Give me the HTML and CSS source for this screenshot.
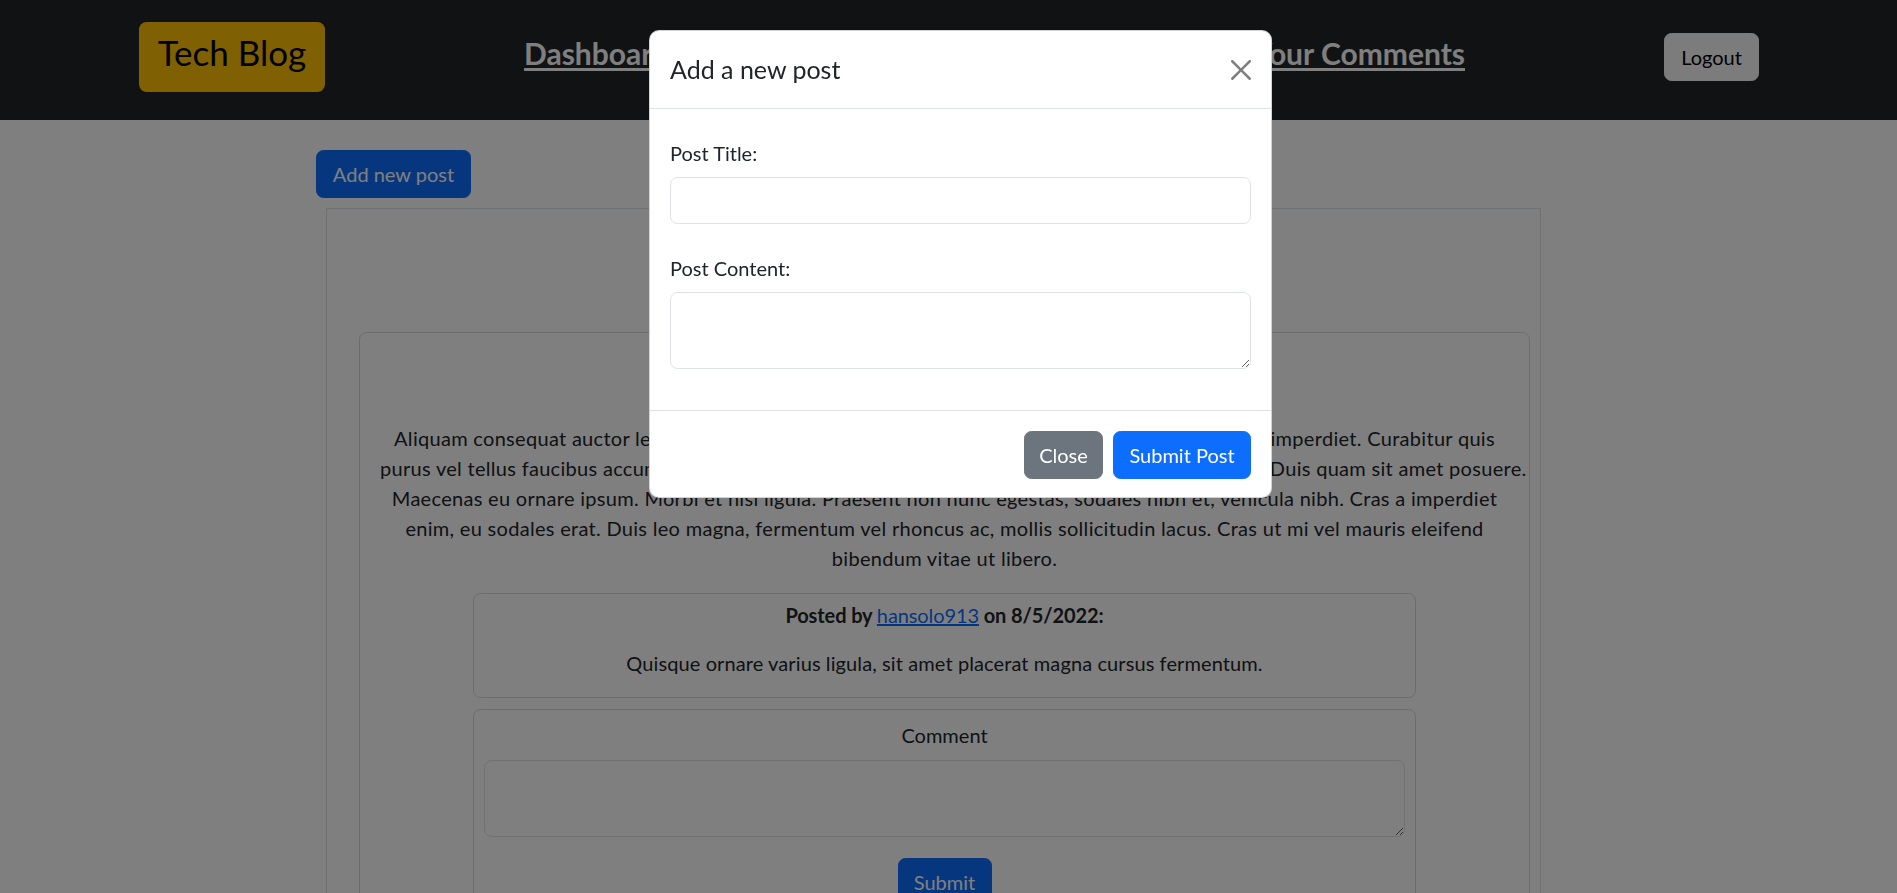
FILE: index.html
```html
<!DOCTYPE html>
<html lang="en">
<head>
<meta charset="utf-8">
<title>Tech Blog</title>
<link rel="stylesheet" href="styles.css">
</head>
<body>
<header class="navbar">
  <a class="brand" href="#">Tech Blog</a>
  <nav class="nav-links">
    <a class="nav-link" href="#">Dashboard</a>
    <a class="nav-link" href="#">Your Posts</a>
    <a class="nav-link" href="#">Your Comments</a>
  </nav>
  <button class="btn btn-light btn-logout" type="button">Logout</button>
</header>

<main class="main">
  <button class="btn btn-primary btn-add" type="button">Add new post</button>
  <section class="posts-box">
    <h2 class="box-title">Your Posts</h2>
    <article class="post-card">
      <h3 class="post-title">Lorem Ipsum</h3>
      <p class="post-text">
        <span class="line">Aliquam consequat auctor leo, vitae semper est facilisis et. Sed in lorem lacus. Nunc vulputate ex imperdiet. Curabitur quis</span>
        <span class="line">purus vel tellus faucibus accumsan. Nam tincidunt lectus vel metus finibus, in dapibus tortor lacus. Duis quam sit amet posuere.</span>
        <span class="line">Maecenas eu ornare ipsum. Morbi et nisi ligula. Praesent non nunc egestas, sodales nibh et, vehicula nibh. Cras a imperdiet</span>
        <span class="line">enim, eu sodales erat. Duis leo magna, fermentum vel rhoncus ac, mollis sollicitudin lacus. Cras ut mi vel mauris eleifend</span>
        <span class="line">bibendum vitae ut libero.</span>
      </p>
      <div class="comment-card">
        <div class="comment-meta">Posted by <a class="user-link" href="#">hansolo913</a> on 8/5/2022:</div>
        <div class="comment-body">Quisque ornare varius ligula, sit amet placerat magna cursus fermentum.</div>
      </div>
      <form class="comment-form">
        <label class="comment-label" for="comment">Comment</label>
        <textarea id="comment" class="form-control comment-input" rows="2"></textarea>
        <button class="btn btn-primary btn-submit" type="button">Submit</button>
      </form>
    </article>
  </section>
</main>

<div class="backdrop"></div>

<div class="modal" role="dialog">
  <div class="modal-header">
    <h5 class="modal-title">Add a new post</h5>
    <button class="btn-close" type="button" aria-label="Close">
      <svg viewBox="0 0 16 16" width="20" height="20"><path d="M.293.293a1 1 0 0 1 1.414 0L8 6.586 14.293.293a1 1 0 1 1 1.414 1.414L9.414 8l6.293 6.293a1 1 0 0 1-1.414 1.414L8 9.414l-6.293 6.293a1 1 0 0 1-1.414-1.414L6.586 8 .293 1.707a1 1 0 0 1 0-1.414z"/></svg>
    </button>
  </div>
  <div class="modal-body">
    <div class="form-group group-title">
      <label class="form-label" for="post-title">Post Title:</label>
      <input id="post-title" class="form-control title-input" type="text">
    </div>
    <div class="form-group group-content">
      <label class="form-label" for="post-content">Post Content:</label>
      <textarea id="post-content" class="form-control content-input" rows="2"></textarea>
    </div>
  </div>
  <div class="modal-footer">
    <button class="btn btn-secondary btn-close-modal" type="button">Close</button>
    <button class="btn btn-primary btn-submit-post" type="button">Submit Post</button>
  </div>
</div>
</body>
</html>
```

FILE: styles.css
```css
* { box-sizing: border-box; }

html, body {
  margin: 0;
  height: 893px;
  overflow: hidden;
}

body {
  font-family: "Lato", "Liberation Sans", sans-serif;
  font-size: 20px;
  line-height: 30px;
  color: #212529;
  background: #fff;
}

/* ---------- navbar ---------- */
.navbar {
  height: 120px;
  background: #212529;
  display: flex;
  align-items: flex-start;
  justify-content: space-between;
  padding: 0 138px 0 139px;
}

.brand {
  margin-top: 22px;
  width: 186px;
  height: 70px;
  padding-bottom: 10px;
  background: #ffc107;
  border-radius: 7.5px;
  color: #000;
  font-size: 35px;
  line-height: 42px;
  text-decoration: none;
  display: flex;
  align-items: center;
  justify-content: center;
}

.nav-links {
  margin-top: 31px;
  width: 941px;
  display: flex;
  justify-content: space-between;
}

.nav-link {
  color: #fff;
  font-weight: 700;
  font-size: 30px;
  line-height: 45px;
  text-decoration: underline;
  text-underline-offset: 3px;
}

/* ---------- buttons ---------- */
.btn {
  font-family: inherit;
  font-size: 20px;
  line-height: 30px;
  height: 48px;
  padding: 0;
  border: 1px solid transparent;
  border-radius: 7.5px;
  cursor: pointer;
}

.btn-primary { background: #0d6efd; border-color: #0d6efd; color: #fff; }
.btn-secondary { background: #6c757d; border-color: #6c757d; color: #fff; }
.btn-light { background: #f8f9fa; border-color: #f8f9fa; color: #000; }

.btn-logout { margin-top: 33px; width: 95px; }
.btn-add { width: 155px; }
.btn-submit { width: 94px; margin-top: 21px; }
.btn-close-modal { width: 79px; }
.btn-submit-post { width: 138px; }

/* ---------- main ---------- */
.main {
  padding: 30px 0 0 316px;
}

.posts-box {
  margin: 10px 0 0 10px;
  width: 1215px;
  border: 1px solid #dee2e6;
  padding: 0 10px 0 32px;
}

.box-title {
  margin: 0;
  height: 123px;
  display: flex;
  align-items: center;
  justify-content: center;
  font-size: 30px;
  font-weight: 500;
}

.post-card {
  border: 1px solid #d9d9d9;
  border-radius: 7.5px;
  padding: 20px;
  text-align: center;
}

.post-title {
  margin: 0;
  height: 70px;
  font-size: 28px;
  font-weight: 500;
  line-height: 50px;
}

.post-text {
  margin: 0 0 20px;
  letter-spacing: 0.3px;
}

.line {
  display: block;
  white-space: nowrap;
}

.comment-card {
  width: 943px;
  margin: 0 auto;
  border: 1px solid #d9d9d9;
  border-radius: 7.5px;
  padding: 6px 5px 19px;
}

.comment-meta { font-weight: 700; letter-spacing: -0.1px; }
.comment-body { margin-top: 18px; letter-spacing: 0.1px; }

.user-link {
  color: #0d6efd;
  font-weight: 400;
  text-decoration: underline;
}

.comment-form {
  width: 943px;
  margin: 11px auto 0;
  border: 1px solid #d9d9d9;
  border-radius: 7.5px;
  padding: 10px 10px 20px;
  display: flex;
  flex-direction: column;
  align-items: center;
}

.comment-label { display: block; }

.form-control {
  display: block;
  width: 100%;
  border: 1px solid #dee2e6;
  border-radius: 7.5px;
  font-family: inherit;
  font-size: 20px;
  line-height: 30px;
  padding: 7.5px 15px;
  background: #fff;
  color: #212529;
}

.comment-input {
  margin-top: 10px;
  height: 77px;
}

/* ---------- modal ---------- */
.backdrop {
  position: fixed;
  inset: 0;
  background: rgba(0, 0, 0, 0.5);
  z-index: 10;
}

.modal {
  position: fixed;
  top: 30px;
  left: 649px;
  width: 623px;
  background: #fff;
  border: 1px solid rgba(0, 0, 0, 0.175);
  border-radius: 10px;
  z-index: 20;
}

.modal-header {
  display: flex;
  align-items: center;
  justify-content: space-between;
  padding: 20px;
  border-bottom: 1px solid #dee2e6;
}

.modal-title {
  margin: 0;
  font-size: 25px;
  font-weight: 400;
  line-height: 37px;
}

.btn-close {
  width: 20px;
  height: 20px;
  padding: 0;
  border: 0;
  background: transparent;
  opacity: 0.5;
  cursor: pointer;
  display: flex;
}

.btn-close svg { fill: #000; }

.modal-body {
  padding: 29px 20px 20px;
}

.form-label {
  display: block;
  margin-bottom: 9px;
}

.group-title { margin-bottom: 29px; }
.group-content { margin-bottom: 21px; }

.title-input { height: 47px; }
.content-input { height: 77px; }

.modal-footer {
  display: flex;
  justify-content: flex-end;
  gap: 10px;
  padding: 20px 20px 18px;
  border-top: 1px solid #dee2e6;
}
```
